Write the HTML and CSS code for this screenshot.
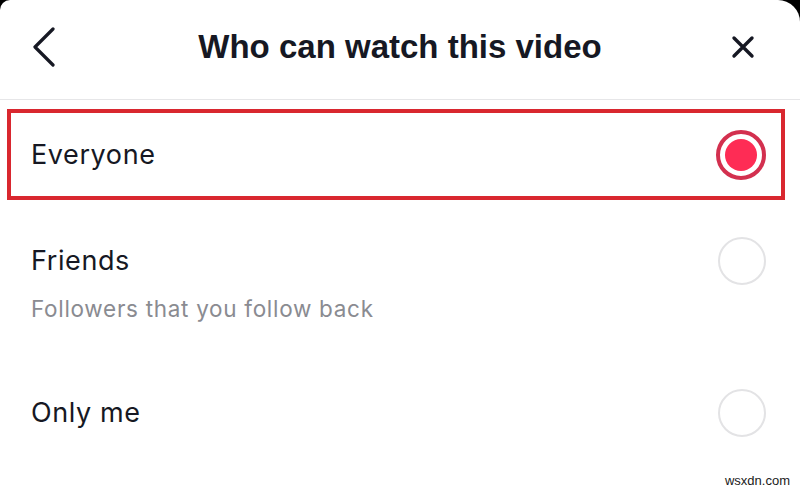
FILE: index.html
```html
<!DOCTYPE html>
<html lang="en">
<head>
<meta charset="utf-8">
<title>Who can watch this video</title>
<link rel="stylesheet" href="styles.css">
</head>
<body>
<div class="sheet">
  <header class="header">
    <div class="hdr-left">
      <svg class="icon back" width="26" height="40" viewBox="0 0 26 40" aria-hidden="true">
        <path d="M22 2 L4 20 L22 38" fill="none" stroke="#161823" stroke-width="3.2" stroke-linecap="round" stroke-linejoin="round"/>
      </svg>
    </div>
    <h1 class="title">Who can watch this video</h1>
    <div class="hdr-right">
      <svg class="icon close" width="24" height="24" viewBox="0 0 24 24" aria-hidden="true">
        <path d="M3 3 L21 21 M21 3 L3 21" fill="none" stroke="#161823" stroke-width="3.4" stroke-linecap="round"/>
      </svg>
    </div>
  </header>

  <div class="options">
    <div class="option option-selected">
      <div class="opt-line">
        <span class="opt-label">Everyone</span>
        <span class="radio radio-on"><span class="radio-dot"></span></span>
      </div>
    </div>

    <div class="option option-friends">
      <div class="opt-line">
        <span class="opt-label">Friends</span>
        <span class="radio"></span>
      </div>
      <div class="opt-sub">Followers that you follow back</div>
    </div>

    <div class="option option-me">
      <div class="opt-line">
        <span class="opt-label">Only me</span>
        <span class="radio"></span>
      </div>
    </div>
  </div>

  <div class="watermark">wsxdn.com</div>
</div>
</body>
</html>
```

FILE: styles.css
```css
html, body {
  margin: 0;
  padding: 0;
  background: #000;
}

body {
  width: 800px;
  height: 489px;
  overflow: hidden;
  font-family: "Inter", "Liberation Sans", Arial, sans-serif;
  color: #161823;
}

.sheet {
  position: relative;
  width: 800px;
  height: 489px;
  background: #fff;
  border-radius: 10px 22px 0 0;
  overflow: hidden;
}

.header {
  height: 93px;
  padding-bottom: 6px;
  border-bottom: 1.5px solid #e6e6e8;
  display: grid;
  grid-template-columns: 1fr auto 1fr;
  align-items: center;
}

.hdr-left {
  display: flex;
  align-items: center;
  padding-left: 31px;
}

.hdr-right {
  display: flex;
  align-items: center;
  justify-content: flex-end;
  padding-right: 45px;
}

.icon {
  display: block;
}

.title {
  margin: 0;
  font-family: "Liberation Sans", Arial, sans-serif;
  font-size: 33px;
  font-weight: 700;
  line-height: 40px;
  color: #161823;
}

.options {
  display: flex;
  flex-direction: column;
  padding-top: 9px;
}

.option {
  display: flex;
  flex-direction: column;
  padding: 0 34px 0 31px;
}

.option-selected {
  margin: 0 15px 0 7px;
  padding: 0 15px 0 20px;
  height: 83px;
  border: 4px solid #d9272f;
  justify-content: center;
}

.option-friends {
  padding-top: 43px;
}

.option-me {
  padding-top: 71px;
}

.opt-line {
  display: flex;
  align-items: center;
  justify-content: space-between;
  height: 36px;
}

.opt-label {
  font-size: 27px;
  letter-spacing: 0.6px;
  line-height: 36px;
  color: #161823;
}

.opt-sub {
  margin-top: 15px;
  font-size: 22.5px;
  letter-spacing: 0.7px;
  line-height: 30px;
  color: #8a8b91;
}

.radio {
  box-sizing: border-box;
  width: 48px;
  height: 48px;
  border-radius: 50%;
  border: 2.5px solid #e3e3e5;
  flex: none;
  display: flex;
  align-items: center;
  justify-content: center;
}

.radio-on {
  width: 50px;
  height: 50px;
  border: 4px solid #d3304f;
}

.radio-dot {
  width: 32px;
  height: 32px;
  border-radius: 50%;
  background: #fe2c55;
}

.watermark {
  position: absolute;
  right: 10px;
  bottom: 1px;
  font-family: "Liberation Sans", Arial, sans-serif;
  font-size: 13px;
  line-height: 14px;
  color: #1a1a1a;
}
```
